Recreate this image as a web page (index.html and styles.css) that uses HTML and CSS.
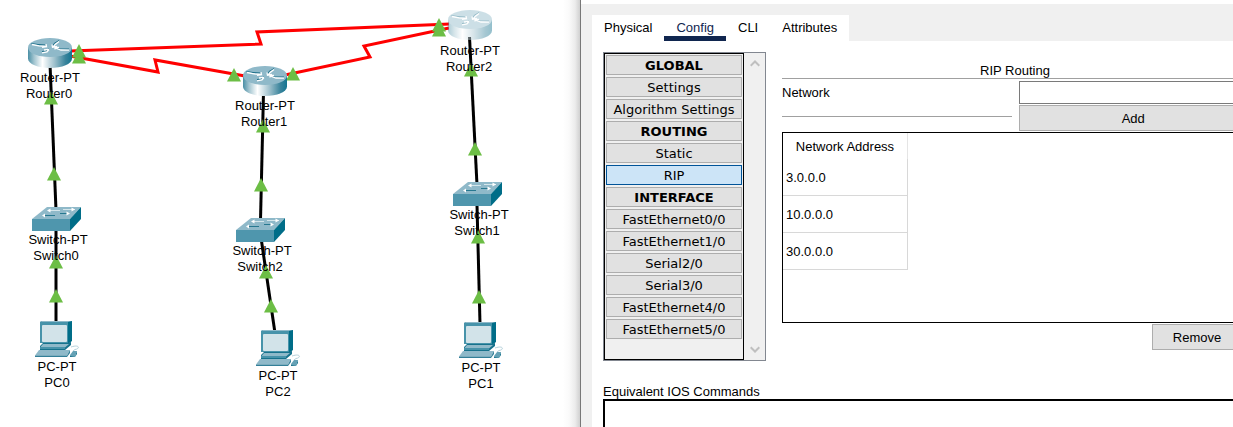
FILE: index.html
```html
<!DOCTYPE html>
<html lang="en">
<head>
<meta charset="utf-8">
<title>RIP Routing</title>
<link rel="stylesheet" href="styles.css">
</head>
<body>
<div class="workspace">
  <main class="canvas">
    <svg class="topology" width="560" height="400" viewBox="0 0 560 400" role="img" aria-label="Network topology">
      <defs>
        <linearGradient id="metal">
          <stop offset="0" stop-color="#4a8fa5"/>
          <stop offset="0.14" stop-color="#a3c5d0"/>
          <stop offset="0.33" stop-color="#fff"/>
          <stop offset="0.6" stop-color="#9fc1cd"/>
          <stop offset="0.85" stop-color="#3a849c"/>
          <stop offset="1" stop-color="#137490"/>
        </linearGradient>
        <g id="router">
          <path d="M0 10V20.500C0 26 10 30 22 30S44 26 44 20.500V10Z" fill="url(#metal)"/>
          <ellipse cx="22" cy="9.500" rx="22" ry="9.500" fill="#8fb9c9"/>
          <g fill="none" stroke="#1d6f89" stroke-width="1">
            <path d="M3.500 5.500 10 6.500 18 7"/><path d="M24.500 8 26 5.500 31 2.500"/>
            <path d="M26.500 9 32 11 41 11"/><path d="M14 13.500 18 13 20.500 10.500"/>
          </g>
          <g fill="none" stroke="#fff" stroke-width="1.300">
            <path d="M4 6.500 11 7.800 18 8.500M14 9.300 18.500 8.800 18 6"/>
            <path d="M25 9.200 27.500 6.200 31 3.500M24 6.500 24.500 9.300 29 8.500"/>
            <path d="M41 12.200 33 12 27 9.800M27 11.500 27 9.300 31 9.300"/>
            <path d="M14 14.800 19 14 21 11.500M16 12 21 11.300"/>
          </g>
        </g>
        <g id="switch">
          <path d="M0 12 15 0H49L38 12Z" fill="#8fb9c9"/>
          <path d="M38 12 49 0V12L38 24Z" fill="#006d88"/>
          <path d="M0 12H38V24H0Z" fill="#4f96ad"/>
          <path d="M12 8.500H23M28 6.500H37" stroke="#277890" fill="none"/>
          <path d="M18 3.500H28M31 2.500H43" stroke="#d5e6eb" fill="none"/>
          <path d="M10 8.500 13 6.500V10.500ZM15 3.500 18.500 1.500V5.500ZM43 2.500 39.500.500V4.500ZM38 6.500 34.500 4.500V8.500Z" fill="#fff"/>
        </g>
        <g id="pc">
          <path d="M5 1 7 0H37V20L33 23Z" fill="#006d88"/>
          <path d="M5 1H33V22H5Z" fill="#4793aa"/>
          <path d="M5 1 7 0H37L33 1Z" fill="#8fb9c9"/>
          <rect x="7" y="4" width="25" height="17" rx="1" fill="#d2e3e9"/>
          <path d="M8 22H31L36 21V24L30 29H5V25Z" fill="#17728c"/>
          <path d="M8 23H34L30 26.500H5Z" fill="#8fb9c9"/>
          <path d="M5 26H30V28H5Z" fill="#4793aa"/>
          <path d="M4 29H35L32 34.500H0Z" fill="#8fb9c9"/>
          <path d="M0 34.500H32L35 29V32L32 36H0Z" fill="#337f98"/>
          <path d="M36 26C45 23 45 28 40 28.500L38 30" stroke="#b3d0da" fill="none"/>
          <path d="M35 34 38 30H42L40 35.500H35Z" fill="#65a1b5"/>
          <path d="M40 35.500 42 30V33L40 36H35V35Z" fill="#17728c"/>
        </g>
        <path id="up" d="M0 0 7 13.500H-7Z" fill="#6cbe45"/>
      </defs>

      <g class="serial-links">
        <path d="M70 51 261 44 257 32 450 24"/>
        <path d="M70 56 158 72 155 60 245 76"/>
        <path d="M285 75 370 57 364 46 449 28"/>
      </g>
      <g class="copper-links">
        <path d="M50 64 56 210"/><path d="M56 230V323"/>
        <path d="M263.500 92 260.500 220"/><path d="M261.500 241 275 333"/>
        <path d="M469.500 37 477 185"/><path d="M477 205 480 324"/>
      </g>
      <use href="#up" x="79" y="44"/><use href="#up" x="79" y="50"/>
      <use href="#up" x="234" y="68"/><use href="#up" x="293" y="67"/>
      <use href="#up" x="439" y="18"/><use href="#up" x="439" y="23"/>
      <use href="#up" x="51" y="91"/><use href="#up" x="263" y="119"/><use href="#up" x="471" y="63"/>
      <use href="#up" x="54" y="167"/><use href="#up" x="56" y="255"/><use href="#up" x="56" y="289"/>
      <use href="#up" x="261" y="178"/><use href="#up" x="266" y="265"/><use href="#up" x="271" y="299"/>
      <use href="#up" x="475" y="142"/><use href="#up" x="478" y="230"/><use href="#up" x="479" y="290"/>

      <use href="#router" x="28" y="38"/>
      <use href="#router" x="243" y="66"/>
      <g class="starting"><rect class="backing" x="449" y="20" width="42" height="12"/><use href="#router" x="448" y="10" class="faded"/></g>
      <use href="#switch" x="32" y="207"/>
      <use href="#switch" x="236" y="218"/>
      <use href="#switch" x="453" y="182"/>
      <use href="#pc" x="35" y="321"/>
      <use href="#pc" x="256" y="330"/>
      <use href="#pc" x="459" y="322"/>

      <g class="labels">
        <text x="50" y="82">Router-PT</text><text x="49" y="98">Router0</text>
        <text x="265" y="110">Router-PT</text><text x="264" y="126">Router1</text>
        <text x="470" y="55">Router-PT</text><text x="469" y="71">Router2</text>
        <text x="58" y="244">Switch-PT</text><text x="56" y="260">Switch0</text>
        <text x="262" y="255">Switch-PT</text><text x="260" y="271">Switch2</text>
        <text x="479" y="219">Switch-PT</text><text x="477" y="235">Switch1</text>
        <text x="57" y="371">PC-PT</text><text x="57" y="387">PC0</text>
        <text x="278" y="380">PC-PT</text><text x="278" y="396">PC2</text>
        <text x="481" y="372">PC-PT</text><text x="481" y="388">PC1</text>
      </g>
    </svg>
  </main>

  <section class="dialog" aria-label="Router configuration">
    <div class="tabs" role="tablist">
      <button class="tab" role="tab" type="button">Physical</button>
      <button class="tab tab-active" role="tab" type="button" aria-selected="true">Config</button>
      <button class="tab" role="tab" type="button">CLI</button>
      <button class="tab" role="tab" type="button">Attributes</button>
    </div>
    <div class="page">
      <div class="config">
        <div class="sidebar">
          <nav class="menu">
            <button class="item heading" type="button">GLOBAL</button>
            <button class="item" type="button">Settings</button>
            <button class="item" type="button">Algorithm Settings</button>
            <button class="item heading" type="button">ROUTING</button>
            <button class="item" type="button">Static</button>
            <button class="item selected" type="button">RIP</button>
            <button class="item heading" type="button">INTERFACE</button>
            <button class="item" type="button">FastEthernet0/0</button>
            <button class="item" type="button">FastEthernet1/0</button>
            <button class="item" type="button">Serial2/0</button>
            <button class="item" type="button">Serial3/0</button>
            <button class="item" type="button">FastEthernet4/0</button>
            <button class="item" type="button">FastEthernet5/0</button>
          </nav>
          <div class="scrollbar">
            <svg width="10" height="7" viewBox="0 0 10 7"><path d="M.700 5.800 5 1.500 9.300 5.800"/></svg>
            <svg width="10" height="7" viewBox="0 0 10 7"><path d="M.700 1.200 5 5.500 9.300 1.200"/></svg>
          </div>
        </div>
        <form class="rip">
          <h1 class="title">RIP Routing</h1>
          <div class="fields">
            <div class="field-label">
              <label for="network">Network</label>
              <hr class="rule">
            </div>
            <div class="field-input">
              <input class="network" id="network" type="text">
              <button class="action add" type="button">Add</button>
            </div>
          </div>
          <div class="list">
            <table class="networks">
              <thead><tr><th scope="col">Network Address</th></tr></thead>
              <tbody>
                <tr><td>3.0.0.0</td></tr>
                <tr><td>10.0.0.0</td></tr>
                <tr><td>30.0.0.0</td></tr>
              </tbody>
            </table>
          </div>
          <button class="action remove" type="button">Remove</button>
        </form>
      </div>
      <div class="ios">
        <label for="commands">Equivalent IOS Commands</label>
        <textarea class="commands" id="commands" readonly></textarea>
      </div>
    </div>
  </section>
</div>
</body>
</html>
```
FILE: styles.css
```css
* { box-sizing: border-box; }

body {
  margin: 0;
  overflow: hidden;
  background: #fff;
  color: #000;
  font: 13px/16px "Liberation Sans", Arial, sans-serif;
}

button, input, textarea { font: inherit; color: inherit; border-radius: 0; margin: 0; }

.workspace {
  display: grid;
  grid-template-columns: 580px minmax(0, 1fr);
  height: 100vh;
}

/* Topology canvas */
.canvas {
  background: linear-gradient(to left, #d0d0d0, #ececec 5px, #fafafa 11px, #fff 17px);
  overflow: hidden;
}
.topology { display: block; }
.serial-links path { fill: none; stroke: #f00; stroke-width: 3; }
.copper-links path { fill: none; stroke: #000; stroke-width: 3; }
.backing { fill: #fff; }
.faded { opacity: 0.45; }
.labels { fill: #000; text-anchor: middle; }

/* Configuration window; its right edge runs on past the viewport */
.dialog {
  display: flex;
  flex-direction: column;
  margin-right: -15px;
  padding-left: 11px;
  border-left: 1px solid #777;
  background: linear-gradient(#fff 4px, #f0f0f0 4px);
}
.tabs { display: flex; align-self: flex-start; margin-top: 15px; background: #fff; }
.tab {
  height: 26px;
  padding: 4px 12px 0;
  border: 0;
  border-bottom: 5px solid transparent;
  background: none;
  line-height: 18px;
}
.tab-active { border-bottom-color: #10264f; color: #10264f; }
.page {
  flex: 1;
  display: flex;
  flex-direction: column;
  gap: 23px;
  min-height: 0;
  padding: 11px 0 0 11px;
  background: #fff;
}
.config { display: flex; gap: 16px; }

.sidebar {
  display: flex;
  flex: none;
  width: 163px;
  height: 309px;
  border: 1px solid #828790;
  background: #f0f0f0;
}
.menu {
  display: flex;
  flex-direction: column;
  gap: 2px;
  width: 140px;
  padding: 1px;
  border: 1px solid #000;
}
.item {
  height: 20px;
  padding: 2px 0 0;
  border: 1px solid #adadad;
  background: #e1e1e1;
  font: 13px/16px "DejaVu Sans", Verdana, sans-serif;
}
.heading { font-weight: bold; }
.selected { border-color: #005499; background: #cce4f7; }
.scrollbar {
  flex: 1;
  display: flex;
  flex-direction: column;
  justify-content: space-between;
  align-items: center;
  padding: 7px 0;
}
.scrollbar path { fill: none; stroke: #bfbfbf; stroke-width: 2; }

.rip { flex: 1; display: flex; flex-direction: column; min-width: 0; padding-top: 11px; }
.title {
  height: 16px;
  margin: 0;
  border-bottom: 1px solid #a0a0a0;
  font-size: 13px;
  font-weight: normal;
  text-align: center;
}
.fields { display: flex; gap: 7px; padding-top: 2px; }
.field-label { flex: 1; padding-top: 4px; }
.rule { margin: 15px 0 0; border: 0; border-top: 1px solid #a0a0a0; }
.field-input { flex: 1; display: flex; flex-direction: column; gap: 1px; }
.network { width: 100%; height: 23px; padding: 0 4px; border: 1px solid #7a7a7a; background: #fff; }
.action { height: 26px; padding: 2px 0 0; border: 1px solid #adadad; background: #e1e1e1; }
.list { height: 191px; margin-top: 1px; border: 1px solid #000; background: #fff; }
.networks { border-collapse: separate; border-spacing: 0; width: 125px; }
.networks th { height: 26px; padding: 2px 0 0; border-right: 1px solid #e5e5e5; font-weight: normal; }
.networks td { height: 37px; padding: 2px 3px 0; border-right: 1px solid #d8d8d8; border-bottom: 1px solid #d8d8d8; }
.remove { align-self: flex-end; width: 90px; margin: 1px 6px 0 0; }

.ios { flex: 1; display: flex; flex-direction: column; min-height: 0; }
.commands { flex: 1; min-height: 0; width: 100%; margin-top: -1px; border: 2px solid #000; border-bottom: 0; background: #fff; resize: none; }
```
